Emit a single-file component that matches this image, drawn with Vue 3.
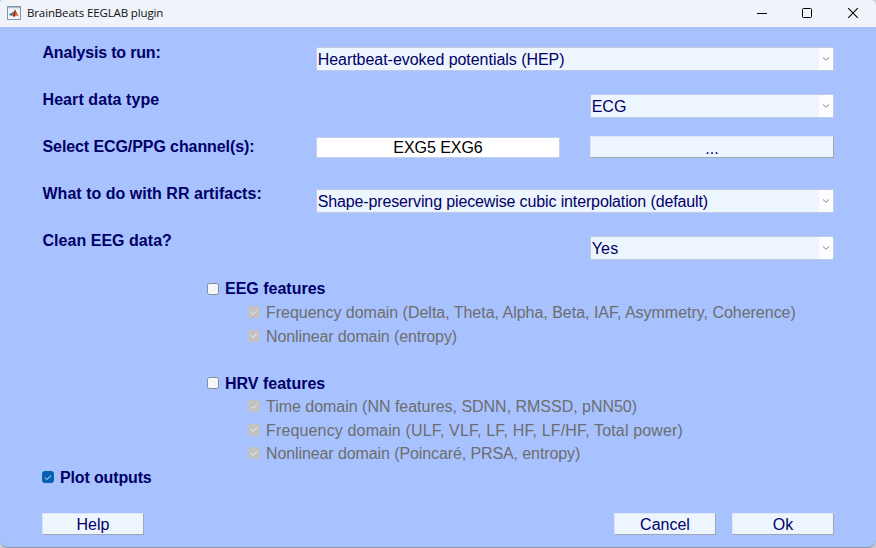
<script setup>
import { ref } from 'vue'

const fields = [
  { label: 'Analysis to run:', kind: 'wide', value: 'Heartbeat-evoked potentials (HEP)', labelTrack: -0.18, track: -0.04 },
  { label: 'Heart data type', kind: 'narrow', value: 'ECG', labelTrack: 0.08, track: 0 },
  { label: 'Select ECG/PPG channel(s):', kind: 'channels', value: 'EXG5 EXG6', labelTrack: -0.09, track: -0.06 },
  { label: 'What to do with RR artifacts:', kind: 'wide', value: 'Shape-preserving piecewise cubic interpolation (default)', labelTrack: 0.02, track: -0.13 },
  { label: 'Clean EEG data?', kind: 'narrow', value: 'Yes', labelTrack: 0.03, track: 0.2 },
]

const options = ref([
  { text: 'EEG features', level: 'group', checked: false, track: 0 },
  { text: 'Frequency domain (Delta, Theta, Alpha, Beta, IAF, Asymmetry, Coherence)', level: 'sub', checked: true, track: -0.02 },
  { text: 'Nonlinear domain (entropy)', level: 'sub', checked: true, track: -0.11 },
  { text: '', level: 'gap', checked: false, track: 0 },
  { text: 'HRV features', level: 'group', checked: false, track: 0 },
  { text: 'Time domain (NN features, SDNN, RMSSD, pNN50)', level: 'sub', checked: true, track: -0.02 },
  { text: 'Frequency domain (ULF, VLF, LF, HF, LF/HF, Total power)', level: 'sub', checked: true, track: 0.15 },
  { text: 'Nonlinear domain (Poincaré, PRSA, entropy)', level: 'sub', checked: true, track: -0.1 },
  { text: 'Plot outputs', level: 'top', checked: true, track: -0.14 },
])

const tracking = (px) => ({ letterSpacing: px + 'px' })

function toggle(option) {
  if (option.level !== 'sub') option.checked = !option.checked
}
</script>

<template>
  <div class="desktop">
    <div class="window">
      <header class="titlebar">
        <svg class="app-icon" width="14" height="14" viewBox="0 0 14 14">
          <rect x=".5" y=".5" width="13" height="13" fill="#f2f6fa" stroke="#8497aa" />
          <path d="M1 1h12v1.2H1z" fill="#a9bed1" />
          <path d="M1.8 8.2 5 6.8 7 5l-.8 3.2-2 1.7z" fill="#2f7899" />
          <path d="M4.2 9.9 6.2 8 8 3.2l1.2 2.2 2.6 5-2.2-1.1L7 11.3l-1.4-2z" fill="#d4481c" />
          <path d="M8 3.4 8.7 7 7 11l-1-1.8 1.2-3z" fill="#8f2818" />
          <path d="m8.8 6 .9 3.1-1.3.7z" fill="#f0a032" />
        </svg>
        <span class="title">BrainBeats EEGLAB plugin</span>
        <svg class="sys" width="110" height="26" viewBox="0 0 110 26" fill="none" stroke="#000">
          <path d="M4 13.5h10" />
          <rect x="49.5" y="8.5" width="9" height="9" rx="1" />
          <path d="m95.2 8.2 9.6 9.6m0-9.6-9.6 9.6" stroke-width="1.1" />
        </svg>
      </header>

      <main class="form">
        <div v-for="f in fields" :key="f.label" class="row" :class="f.kind">
          <label class="label" :style="tracking(f.labelTrack)">{{ f.label }}</label>
          <template v-if="f.kind === 'channels'">
            <div class="edit" :style="tracking(f.track)">{{ f.value }}</div>
            <button class="button browse">...</button>
          </template>
          <div v-else class="popup">
            <span class="value" :style="tracking(f.track)">{{ f.value }}</span>
            <span class="arrow">
              <svg width="8" height="6" viewBox="0 0 8 6" fill="none" stroke="#858585">
                <path d="m1 1.5 3 2.7 3-2.7" />
              </svg>
            </span>
          </div>
        </div>

        <div v-for="(o, i) in options" :key="i" class="option" :class="o.level" @click="toggle(o)">
          <template v-if="o.level !== 'gap'">
            <span class="box" :class="{ checked: o.checked }">
              <svg v-if="o.checked" width="8" height="7" viewBox="0 0 8 7" fill="none" stroke="currentColor">
                <path d="m1 3.5 2 2 4-4" />
              </svg>
            </span>
            <span class="text" :style="tracking(o.track)">{{ o.text }}</span>
          </template>
        </div>

        <footer class="actions">
          <button class="button help">Help</button>
          <button class="button">Cancel</button>
          <button class="button">Ok</button>
        </footer>
      </main>
    </div>
  </div>
</template>

<style>
body { margin: 0; }
</style>

<style scoped>
.desktop {
  width: 876px;
  height: 548px;
  background: #c9cbd0;
  overflow: hidden;
}
.window {
  box-sizing: border-box;
  height: 548px;
  border-bottom: 1px solid #8f98ac;
  border-radius: 3px 5px 8px 8px;
  overflow: hidden;
  background: #a8c2ff;
  font-family: "Liberation Sans", Arial, sans-serif;
  font-size: 16px;
  color: #000066;
}
.titlebar {
  display: flex;
  align-items: center;
  height: 27px;
  box-sizing: border-box;
  padding: 0 8px 1px 7px;
  background: #f0f3f9;
  color: #111;
}
.app-icon { margin-right: 6px; flex: none; }
.title {
  flex: 1;
  font: 11.5px/26px "Open Sans", sans-serif;
  letter-spacing: -0.13px;
  white-space: nowrap;
}
.sys { margin-right: 5px; }
.form { padding: 14px 42px 0; }
.row {
  display: grid;
  align-items: start;
  height: 47.2px;
}
.row.wide { grid-template-columns: 274.4px 517.2px; }
.row.narrow { grid-template-columns: 548.4px 243.2px; }
.row.channels { grid-template-columns: 274.4px 243.2px 274.4px; }
.label {
  margin-top: -0.45px;
  padding-left: 0.5px;
  font-weight: bold;
  line-height: 23px;
  white-space: nowrap;
}
.popup {
  display: flex;
  box-sizing: border-box;
  height: 24px;
  margin-top: 5.96px;
  border: 1px solid #c0cbe3;
  background: #edf5ff;
}
.value {
  flex: 1;
  padding-left: 0.3px;
  line-height: 24px;
  white-space: nowrap;
}
.arrow {
  display: flex;
  align-items: center;
  justify-content: center;
  width: 14px;
  background: #fdfdfe;
}
.edit {
  box-sizing: border-box;
  height: 21px;
  margin-top: 2px;
  border: 1px solid #c5d0e6;
  background: #fff;
  color: #000;
  line-height: 20px;
  text-align: center;
}
.button {
  box-sizing: border-box;
  width: 102px;
  height: 22px;
  padding: 1px 0 0;
  border: 1px solid;
  border-color: #dfe6f2 #a0a5b0 #a0a5b0 #dfe6f2;
  border-radius: 0;
  background: #edf5ff;
  color: #000066;
  font: 16px/20px "Liberation Sans", Arial, sans-serif;
}
.browse {
  width: 244px;
  margin: 1px 0 0 30.4px;
  padding: 2px 0 0;
}
.option {
  display: flex;
  align-items: center;
  height: 23.57px;
}
.group { padding-left: 165px; }
.sub { padding-left: 206px; color: #6d6d6d; }
.group, .top { font-weight: bold; }
.box {
  display: flex;
  align-items: center;
  justify-content: center;
  box-sizing: border-box;
  width: 12px;
  height: 12px;
  margin: -0.4px 6px 0 0;
  border: 1px solid #858b99;
  border-radius: 2.5px;
  background: #f5f5f5;
}
.box.checked { border-color: #0560b5; background: #0560b5; color: #e2effc; }
.sub .box.checked { border-color: #c2c2c2; background: #c2c2c2; color: #f2f2f2; }
.text { padding-top: 0.52px; line-height: 23px; white-space: nowrap; }
.actions {
  display: flex;
  gap: 16px;
  margin: 23.5px 0 0;
}
.help { margin-right: auto; }
</style>
